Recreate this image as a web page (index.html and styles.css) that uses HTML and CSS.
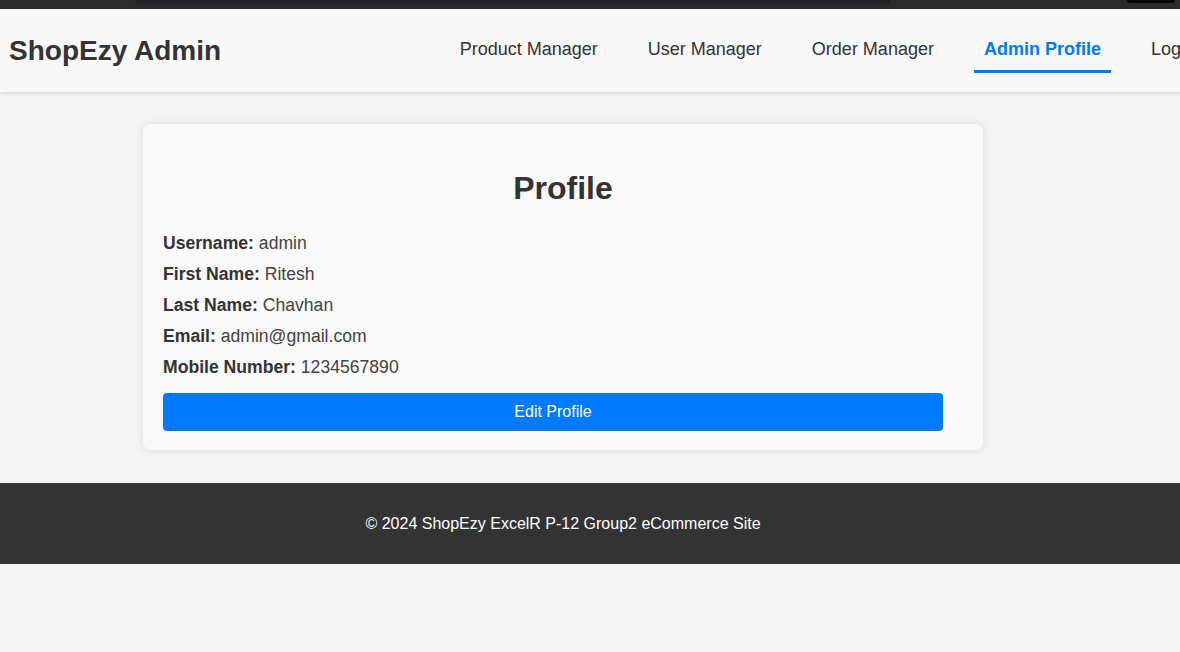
FILE: index.html
```html
<!DOCTYPE html>
<html lang="en">
<head>
<meta charset="utf-8">
<title>ShopEzy Admin - Profile</title>
<link rel="stylesheet" href="styles.css">
</head>
<body>
<div class="chrome">
  <span class="chrome-tab"></span>
  <span class="chrome-pill"></span>
</div>
<header class="site-header">
  <div class="logo">ShopEzy Admin</div>
  <nav class="main-nav">
    <ul class="nav-list">
      <li><a class="nav-link" href="#">Product Manager</a></li>
      <li><a class="nav-link" href="#">User Manager</a></li>
      <li><a class="nav-link" href="#">Order Manager</a></li>
      <li><a class="nav-link active" href="#">Admin Profile</a></li>
      <li><a class="nav-link" href="#">Logout</a></li>
    </ul>
  </nav>
</header>
<div class="page">
  <main class="profile-card">
    <h2 class="profile-title">Profile</h2>
    <p class="field"><strong>Username:</strong> <span class="value">admin</span></p>
    <p class="field"><strong>First Name:</strong> <span class="value">Ritesh</span></p>
    <p class="field"><strong>Last Name:</strong> <span class="value">Chavhan</span></p>
    <p class="field"><strong>Email:</strong> <span class="value">admin@gmail.com</span></p>
    <p class="field"><strong>Mobile Number:</strong> <span class="value">1234567890</span></p>
    <button class="edit-btn" type="button">Edit Profile</button>
  </main>
</div>
<footer class="site-footer">
  <p class="footer-text">&copy; 2024 ShopEzy ExcelR P-12 Group2 eCommerce Site</p>
</footer>
</body>
</html>
```

FILE: styles.css
```css
html {
  overflow-x: hidden;
  background: #f4f4f4;
}

body {
  margin: 0;
  font-family: "Liberation Sans", Arial, sans-serif;
  color: #333;
  background: #f4f4f4;
}

.chrome {
  display: flex;
  align-items: flex-start;
  height: 9px;
  background: #2b2b2b;
  padding-left: 135px;
}

.chrome-tab {
  width: 755px;
  height: 4px;
  background: #202124;
  border-radius: 0 0 4px 4px;
}

.chrome-pill {
  width: 48px;
  height: 3px;
  margin-left: auto;
  margin-right: 5px;
  background: #050505;
  border-radius: 0 0 3px 3px;
}

.site-header {
  display: flex;
  align-items: center;
  justify-content: space-between;
  box-sizing: border-box;
  width: 1224px;
  height: 83px;
  padding: 0 8px 0 9px;
  background: #f8f8f8;
  box-shadow: 0 2px 4px rgba(0, 0, 0, 0.1);
  position: relative;
}

.logo {
  font-size: 28px;
  font-weight: bold;
  color: #333;
}

.nav-list {
  display: flex;
  gap: 30px;
  list-style: none;
  margin: 0;
  padding: 0;
}

.nav-link {
  display: block;
  padding: 10px 10px;
  font-size: 18px;
  line-height: 21px;
  color: #333;
  text-decoration: none;
  border-bottom: 3px solid transparent;
}

.nav-link.active {
  color: #007bff;
  font-weight: bold;
  border-bottom-color: #007bff;
}

.page {
  width: 1126px;
  padding: 32px 0 33px;
}

.profile-card {
  display: block;
  box-sizing: border-box;
  width: 840px;
  margin: 0 auto;
  padding: 20px 20px 19px;
  background: #f9f9f9;
  border-radius: 8px;
  box-shadow: 0 0 10px rgba(0, 0, 0, 0.1);
}

.profile-title {
  margin: 26px 0 26px;
  font-size: 32px;
  font-weight: bold;
  text-align: center;
  color: #333;
}

.field {
  margin: 10px 0;
  font-size: 17.6px;
  line-height: 21px;
  color: #333;
}

.value {
  color: #444;
}

.edit-btn {
  display: block;
  width: 780px;
  height: 38px;
  margin-top: 15px;
  padding: 0;
  border: none;
  border-radius: 4px;
  background: #007bff;
  color: #fff;
  font-family: "Liberation Sans", Arial, sans-serif;
  font-size: 16px;
  cursor: pointer;
}

.site-footer {
  background: #333;
  padding: 31px 0;
}

.footer-text {
  width: 1126px;
  margin: 0;
  font-size: 16px;
  line-height: 19px;
  text-align: center;
  color: #fff;
}
```
